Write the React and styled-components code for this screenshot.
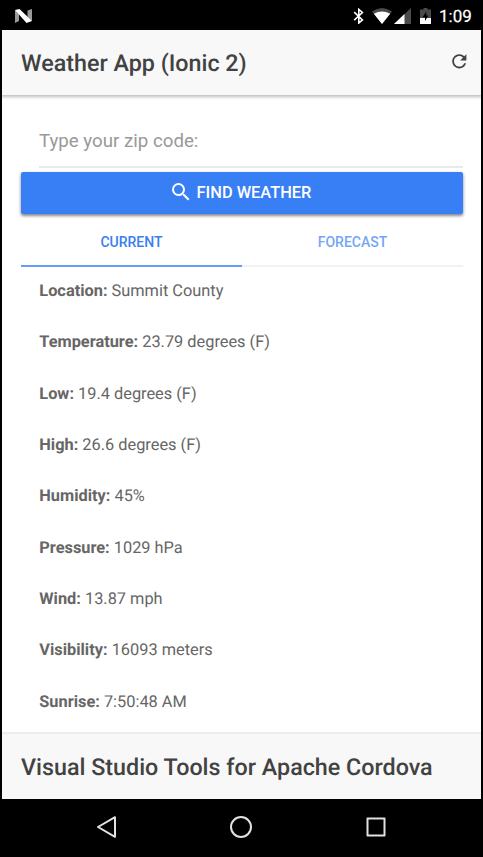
import React from "react";
import styled, { createGlobalStyle } from "styled-components";

const GlobalStyle = createGlobalStyle`
  * { box-sizing: border-box; }
  body { margin: 0; background: #000; font-family: Roboto, sans-serif; text-rendering: geometricPrecision; }
`;

const Phone = styled.div`
  display: flex;
  flex-direction: column;
  height: 857px;
  padding: 0 2px;
  background: #000;
  overflow: hidden;
`;

const StatusBar = styled.div`
  display: flex;
  align-items: flex-start;
  height: 30px;
  padding: 8px 9px 0 12px;
  flex: none;
`;

const StatusIcon = styled.svg`
  display: block;
  flex: none;
  margin-left: ${(p) => p.$gap || 0}px;
`;

const Spacer = styled.div`
  flex: 1;
`;

const Clock = styled.span`
  width: 33px;
  margin-left: 8px;
  color: #fff;
  font-size: 17px;
  font-weight: 400;
  line-height: 18px;
  -webkit-text-stroke: 0.2px #fff;
`;

const Toolbar = styled.header`
  display: flex;
  align-items: center;
  justify-content: space-between;
  flex: none;
  height: 65px;
  padding: 0 11px 0 19px;
  background: #f8f8f8;
  box-shadow: 0 1px 3px 1px rgba(0, 0, 0, 0.26);
  z-index: 1;
  clip-path: inset(0 0 -6px 0);
`;

const Title = styled.h1`
  margin: 0;
  color: #424242;
  font-size: 23.3px;
  font-weight: 500;
  line-height: 28px;
  white-space: nowrap;
`;

const IconButton = styled.button`
  display: flex;
  padding: 0 0 3px;
  border: 0;
  background: none;
`;

const Content = styled.main`
  flex: 1;
  min-height: 0;
  padding: 20px 18px 0 19px;
  background: #fff;
  overflow: hidden;
`;

const ZipInput = styled.input`
  display: block;
  width: calc(100% - 18px);
  height: 53px;
  margin: 0 0 4px 18px;
  padding: 1px 0 0;
  border: 0;
  border-bottom: 2px solid #e9e9e9;
  outline: 0;
  background: none;
  font-family: inherit;
  font-size: 18.7px;
  &::placeholder { color: #999; opacity: 1; }
`;

const FindButton = styled.button`
  display: flex;
  align-items: center;
  justify-content: center;
  gap: 4px;
  width: 100%;
  height: 42px;
  padding: 0 4px 2px 0;
  border: 0;
  border-radius: 2px;
  background: #387ef5;
  color: #fff;
  font-family: inherit;
  font-size: 16.4px;
  font-weight: 500;
  box-shadow: 0 2px 3px rgba(0, 0, 0, 0.4), 0 1px 4px rgba(0, 0, 0, 0.14);
`;

const Tabs = styled.div`
  display: flex;
  height: 53px;
`;

const Tab = styled.button`
  flex: 1;
  padding: 5px 0 0;
  border: 0;
  border-bottom: 2px solid ${(p) => (p.$active ? "#659cf7" : "#f2f2f2")};
  background: none;
  color: ${(p) => (p.$active ? "#387ef5" : "#74a5f8")};
  font-family: inherit;
  font-size: 14px;
  font-weight: 500;
`;

const Readings = styled.dl`
  display: flex;
  flex-direction: column;
  gap: 31.35px;
  margin: 0;
  padding: 14px 0 0 18.3px;
`;

const Reading = styled.div`
  display: flex;
  gap: 4.1px;
  height: 20px;
  color: #666;
  font-size: 16.35px;
  line-height: 20px;
  white-space: nowrap;
`;

const Label = styled.dt`
  font-weight: 700;
`;

const Value = styled.dd`
  margin: 0;
`;

const Footer = styled.footer`
  display: flex;
  align-items: center;
  flex: none;
  height: 67px;
  padding: 0 19px;
  border-top: 2px solid #ececec;
  background: #f8f8f8;
`;

const NavBar = styled.nav`
  display: flex;
  align-items: center;
  justify-content: center;
  flex: none;
  gap: 110.5px;
  height: 58px;
  padding: 0 1px 2px 0;
`;

const READINGS = [
  ["Location", "Summit County"],
  ["Temperature", "23.79 degrees (F)"],
  ["Low", "19.4 degrees (F)"],
  ["High", "26.6 degrees (F)"],
  ["Humidity", "45%"],
  ["Pressure", "1029 hPa"],
  ["Wind", "13.87 mph"],
  ["Visibility", "16093 meters"],
  ["Sunrise", "7:50:48 AM"],
];

function Status() {
  return (
    <StatusBar>
      <StatusIcon width="18" height="16" viewBox="0 0 18 16">
        <path d="M1 2 5 5V13L1 15ZM13.5 2.5 18 1V13L13.5 11Z" fill="#999" />
        <path d="M1 2 5.5 1 18 13 12.5 15Z" fill="#fff" />
      </StatusIcon>
      <Spacer />
      <StatusIcon width="12" height="16" viewBox="0 0 12 16" fill="none" stroke="#fff" strokeWidth="1.6">
        <path d="M1.2 4.2 9.4 11.9 5.8 15V1.4L9.4 4.5 1.2 12.2" />
      </StatusIcon>
      <StatusIcon $gap={7} width="20" height="16" viewBox="0 0 20 16">
        <path d="M0 3.5Q10-3.5 20 3.5L10 16Z" fill="#4a4a4a" />
        <path d="M1.8 5.8Q10 1.2 18.2 5.8L10 16Z" fill="#fff" />
      </StatusIcon>
      <StatusIcon $gap={2} width="17" height="16" viewBox="0 0 17 16">
        <path d="M17 0V16H0Z" fill="#4a4a4a" />
        <path d="M10.5 6.1V16H0Z" fill="#fff" />
      </StatusIcon>
      <StatusIcon $gap={9} width="11" height="16" viewBox="0 0 11 16">
        <path d="M3.5 0h4v1.5H11V10H0V1.5h3.5Z" fill="#4a4a4a" />
        <path d="M0 10h11V16H0Z" fill="#fff" />
        <path d="M6.3 3.4 2.6 9.2H5V13L8.4 7.4H6.3Z" fill="#000" />
      </StatusIcon>
      <Clock>1:09</Clock>
    </StatusBar>
  );
}

export default function App() {
  return (
    <>
      <GlobalStyle />
      <Phone>
        <Status />
        <Toolbar>
          <Title>Weather App (Ionic 2)</Title>
          <IconButton aria-label="Refresh">
            <svg width="20.6" height="20.6" viewBox="0 0 512 512" fill="#424242">
              <path d="M256 388c-72.597 0-132-59.405-132-132 0-72.601 59.403-132 132-132 36.3 0 69.299 15.4 92.406 39.601L278 234h154V80l-51.698 51.702C348.406 99.798 304.406 80 256 80c-96.797 0-176 79.203-176 176s78.094 176 175.797 176c81.045 0 148.287-54.134 169.401-128H378.85c-18.745 49.561-67.138 84-122.85 84z" />
            </svg>
          </IconButton>
        </Toolbar>
        <Content>
          <ZipInput placeholder="Type your zip code:" />
          <FindButton>
            <svg width="24" height="24" viewBox="0 0 24 24" fill="#fff">
              <path d="M15.5 14h-.79l-.28-.27A6.471 6.471 0 0 0 16 9.5 6.5 6.5 0 1 0 9.5 16c1.61 0 3.09-.59 4.23-1.57l.27.28v.79l5 4.99L20.49 19l-4.99-5zm-6 0C7.01 14 5 11.99 5 9.5S7.01 5 9.5 5 14 7.01 14 9.5 11.99 14 9.5 14z" />
            </svg>
            FIND WEATHER
          </FindButton>
          <Tabs>
            <Tab $active>CURRENT</Tab>
            <Tab>FORECAST</Tab>
          </Tabs>
          <Readings>
            {READINGS.map(([label, value]) => (
              <Reading key={label}>
                <Label>{label}:</Label>
                <Value>{value}</Value>
              </Reading>
            ))}
          </Readings>
        </Content>
        <Footer>
          <Title as="h2">Visual Studio Tools for Apache Cordova</Title>
        </Footer>
        <NavBar>
          <svg width="24" height="24" viewBox="0 0 24 24" fill="none" stroke="#e2e2e2" strokeWidth="2" strokeLinejoin="round">
            <path d="M20 2.2V21.8L3 12Z" />
          </svg>
          <svg width="24" height="24" viewBox="0 0 24 24" fill="none" stroke="#e2e2e2" strokeWidth="2">
            <circle cx="12" cy="12" r="10" />
          </svg>
          <svg width="24" height="24" viewBox="0 0 24 24" fill="none" stroke="#e2e2e2" strokeWidth="2" strokeLinejoin="round">
            <path d="M3.5 3.5h17v17h-17Z" />
          </svg>
        </NavBar>
      </Phone>
    </>
  );
}
